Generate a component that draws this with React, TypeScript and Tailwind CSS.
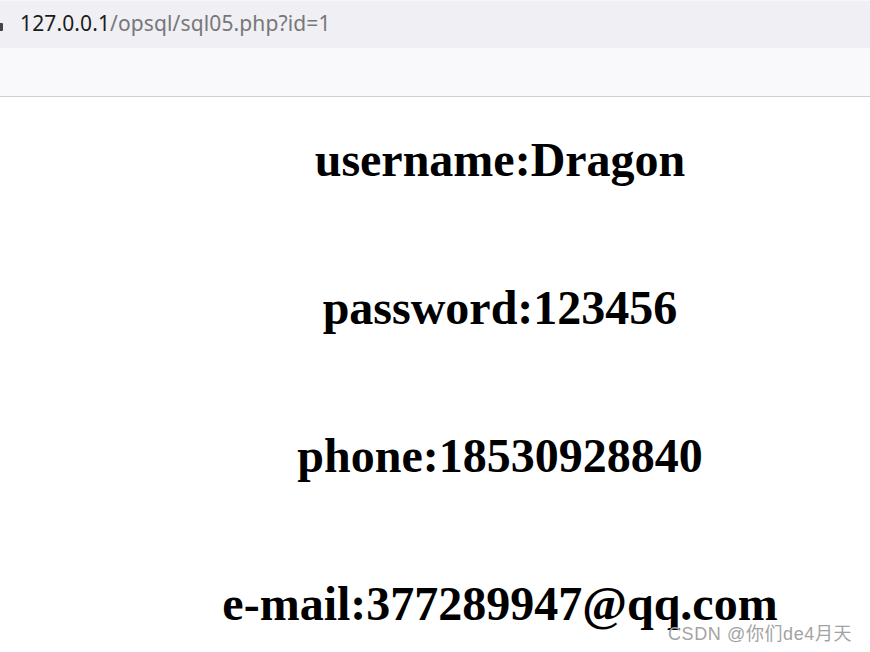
const rows = [
  "username:Dragon",
  "password:123456",
  "phone:18530928840",
  "e-mail:377289947@qq.com",
];

const App = () => {
  return (
    <div className="relative h-[652px] w-[870px] overflow-hidden bg-white">
      {/* Address bar */}
      <div className="h-[48px] border-t border-[#f7f7f9] bg-[#efeff4] flex items-center">
        <div className="h-[8px] w-[3px] rounded-r-[1px] bg-[#444] mt-[4px]" />
        <div
          className="ml-[17px] text-[21px] tracking-[0.12px] pb-[2px]"
          style={{ fontFamily: '"Noto Sans", "Open Sans", sans-serif' }}
        >
          <span className="text-[#1b1b1b]">127.0.0.1</span>
          <span className="text-[#77777b]">/opsql/sql05.php?id=1</span>
        </div>
      </div>

      {/* Toolbar strip */}
      <div className="h-[49px] bg-[#f9f9fb] border-b border-[#cfcfd1]" />

      {/* Page content */}
      <div
        className="flex flex-col items-center gap-[93px] pt-[35px] pl-[130px] text-black"
        style={{ fontFamily: '"Liberation Serif", "Times New Roman", serif' }}
      >
        {rows.map((r) => (
          <h1 key={r} className="m-0 text-[48px] font-bold leading-[55px] whitespace-nowrap">
            {r}
          </h1>
        ))}
      </div>

      {/* Watermark */}
      <div
        className="absolute left-[668px] top-[621px] text-[18px] tracking-[0.6px] text-[#a3a3a3] whitespace-nowrap"
        style={{ fontFamily: '"Liberation Sans", "Noto Sans CJK SC", sans-serif' }}
      >
        CSDN @你们de4月天
      </div>
    </div>
  );
};

export default App;
